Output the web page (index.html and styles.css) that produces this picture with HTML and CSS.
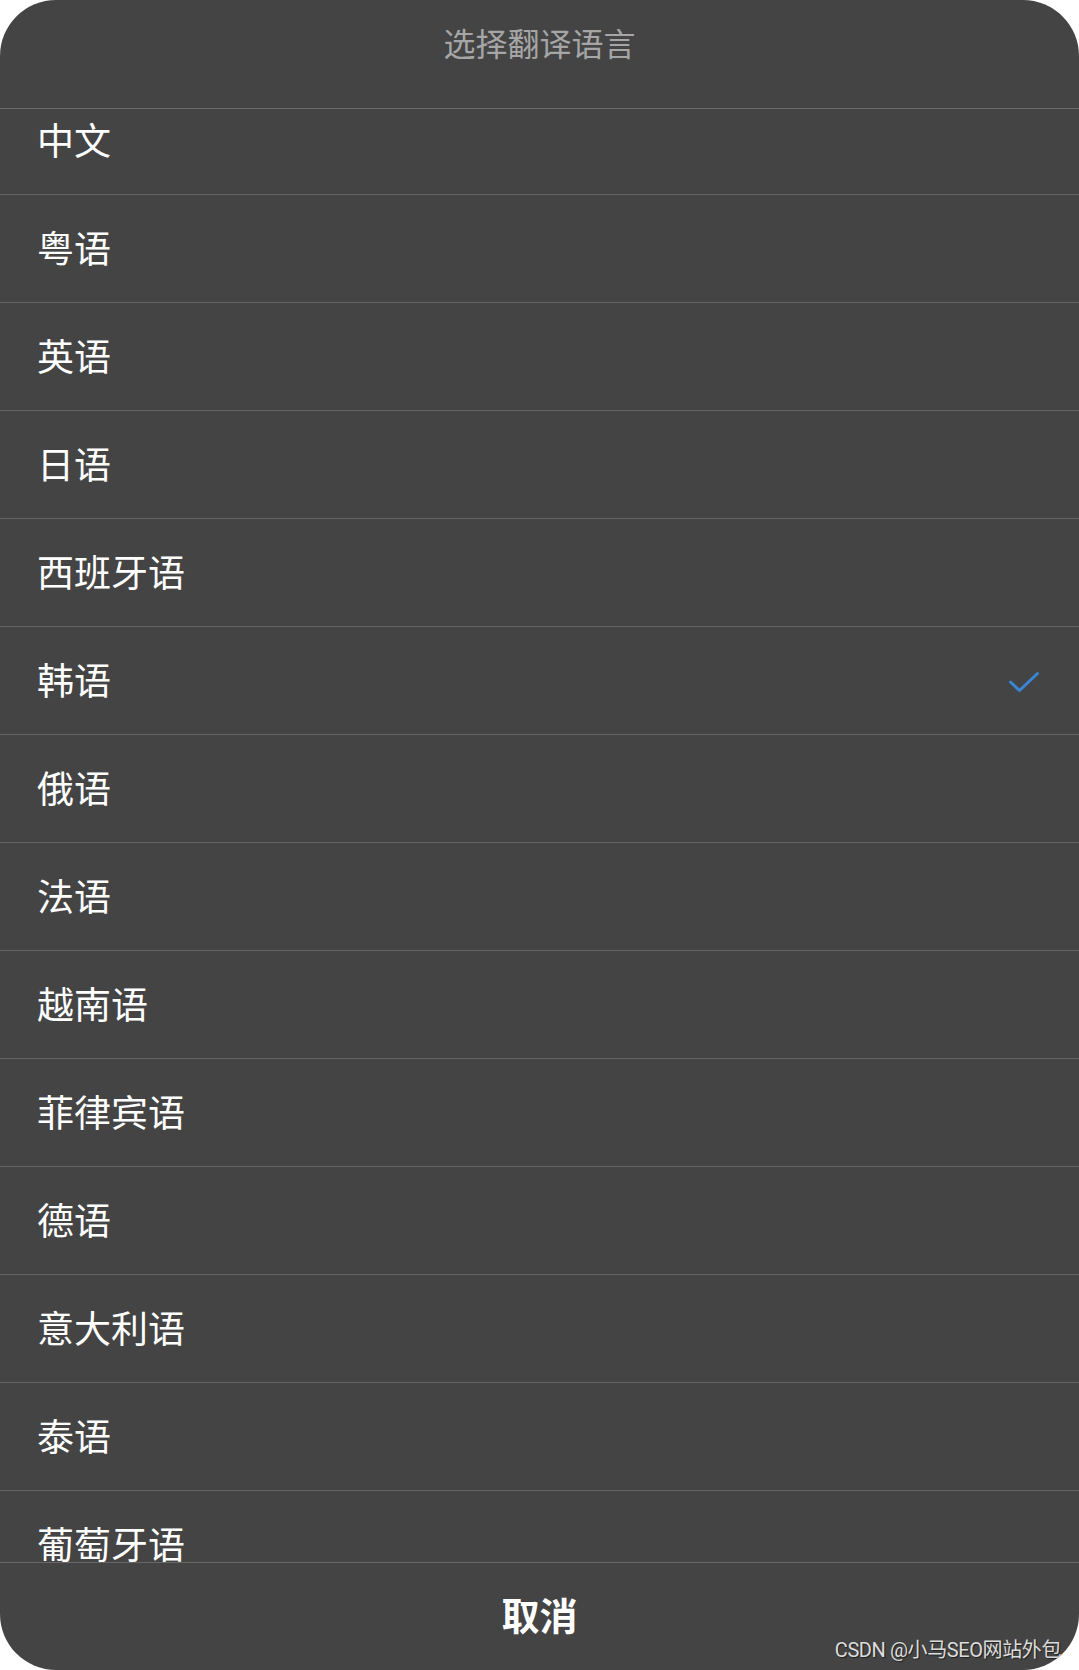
FILE: index.html
```html
<!DOCTYPE html>
<html lang="zh-CN">
<head>
  <meta charset="UTF-8">
  <title>选择翻译语言</title>
  <link rel="stylesheet" href="styles.css">
</head>
<body>
  <div class="sheet">
    <div class="sheet-header">
      <h1>选择翻译语言</h1>
    </div>
    <div class="lang-list">
      <div class="lang-scroll">
        <div class="lang-item">中文</div>
        <div class="lang-item">粤语</div>
        <div class="lang-item">英语</div>
        <div class="lang-item">日语</div>
        <div class="lang-item">西班牙语</div>
        <div class="lang-item selected">
          <span>韩语</span>
          <svg class="check" width="32" height="24" viewBox="0 0 32 24">
            <polyline points="1.5,12 10.5,20.5 28.5,3.5" fill="none" stroke="#3a85d6" stroke-width="3" stroke-linecap="round" stroke-linejoin="round"/>
          </svg>
        </div>
        <div class="lang-item">俄语</div>
        <div class="lang-item">法语</div>
        <div class="lang-item">越南语</div>
        <div class="lang-item">菲律宾语</div>
        <div class="lang-item">德语</div>
        <div class="lang-item">意大利语</div>
        <div class="lang-item">泰语</div>
        <div class="lang-item">葡萄牙语</div>
      </div>
    </div>
    <div class="sheet-footer">
      <button class="cancel">取消</button>
    </div>
    <div class="watermark">CSDN @小马SEO网站外包</div>
  </div>
</body>
</html>
```

FILE: styles.css
```css
body {
  margin: 0;
  padding: 0;
  background-color: #fff;
  font-family: "Noto Sans CJK SC", "Noto Sans", sans-serif;
}
.sheet {
  position: relative;
  width: 1079px;
  height: 1670px;
  background-color: #444444;
  border-radius: 56px;
  overflow: hidden;
  display: flex;
  flex-direction: column;
}
.sheet-header {
  height: 109px;
  box-sizing: border-box;
  padding-top: 20px;
  border-bottom: 1px solid #686868;
  text-align: center;
}
.sheet-header h1 {
  margin: 0;
  font-size: 32px;
  line-height: 44px;
  font-weight: 400;
  color: #a6a6a6;
}
.lang-list {
  flex: 1;
  overflow: hidden;
}
/* list is scrolled a little, first row sits under the header */
.lang-scroll {
  margin-top: -22px;
}
.lang-item {
  height: 108px;
  box-sizing: border-box;
  border-bottom: 1px solid #656565;
  padding: 0 38px 4px 37px;
  display: flex;
  align-items: center;
  justify-content: space-between;
  font-size: 37px;
  color: #fff;
}
.check {
  display: block;
  margin-top: 6px;
}
.sheet-footer {
  height: 108px;
  box-sizing: border-box;
  border-top: 1px solid #686868;
  padding-bottom: 6px;
  display: flex;
  align-items: center;
  justify-content: center;
}
.cancel {
  background: none;
  border: none;
  padding: 0;
  font-family: inherit;
  font-size: 38px;
  font-weight: 700;
  color: #fff;
  line-height: 1;
}
.watermark {
  position: absolute;
  right: 18px;
  bottom: 7px;
  font-family: Roboto, "Noto Sans CJK SC", sans-serif;
  font-size: 20px;
  letter-spacing: -0.4px;
  color: #dcdcdc;
  text-shadow: 1px 1px 1px rgba(0, 0, 0, 0.55);
}
```
